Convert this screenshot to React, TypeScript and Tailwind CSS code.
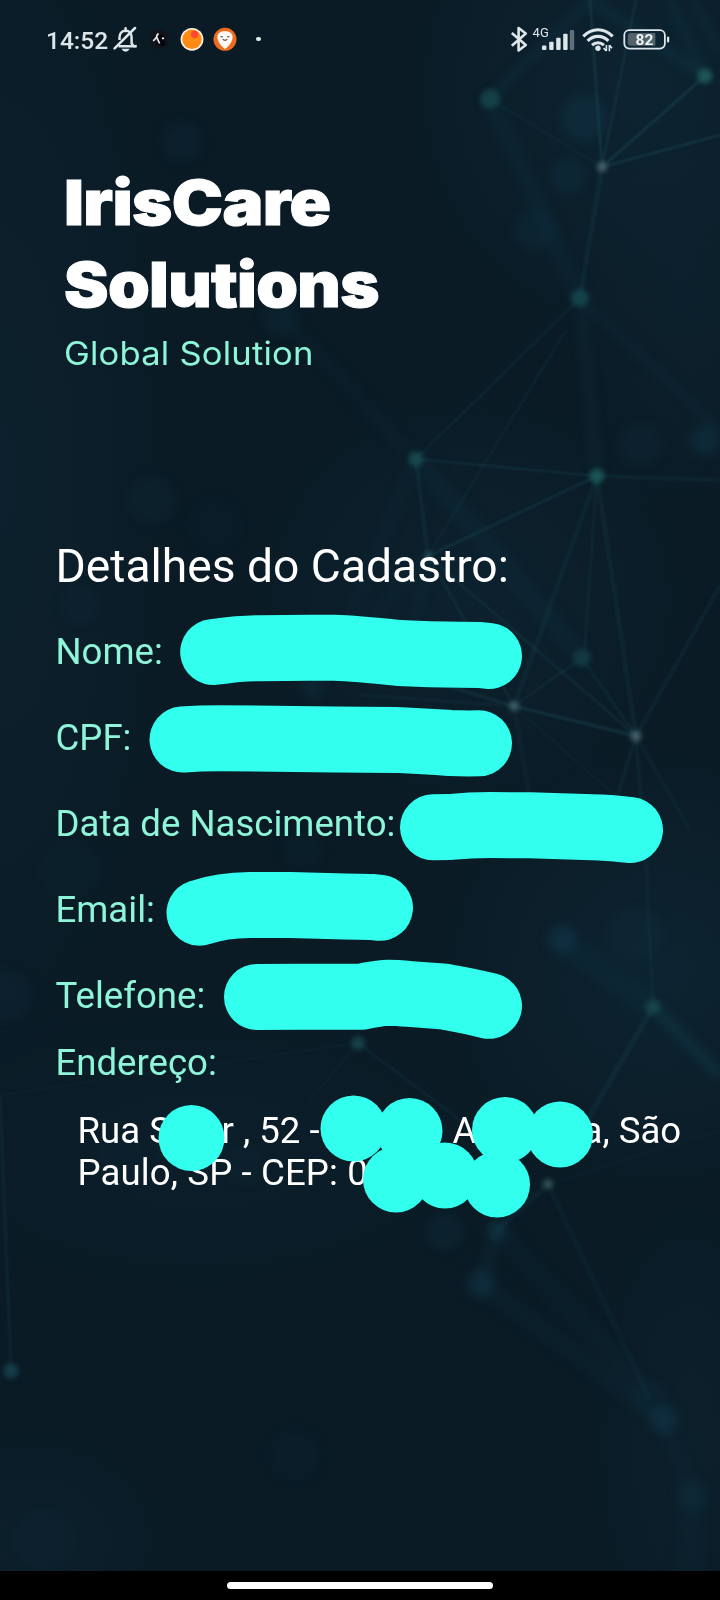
const sharpLines: [number, number, number, number, number, number][] = [
  // x1, y1, x2, y2, width, opacity
  [590, 0, 602, 167, 2, 0.6],
  [636, 0, 602, 167, 2, 0.45],
  [705, 76, 602, 167, 2.5, 0.5],
  [720, 135, 602, 167, 2, 0.55],
  [602, 167, 490, 99, 3, 0.16],
  [602, 167, 580, 298, 5, 0.22],
  [580, 298, 416, 459, 2.5, 0.25],
  [566, 330, 428, 556, 2.5, 0.2],
  [416, 459, 597, 476, 2, 0.42],
  [597, 476, 428, 556, 2.5, 0.38],
  [597, 476, 720, 480, 4, 0.22],
  [416, 459, 428, 556, 4, 0.25],
  [428, 556, 514, 706, 2, 0.38],
  [428, 556, 636, 736, 2, 0.38],
  [597, 476, 514, 706, 5, 0.2],
  [597, 476, 584, 658, 2, 0.3],
  [597, 476, 636, 736, 5, 0.2],
  [582, 658, 636, 736, 3, 0.26],
  [582, 658, 514, 706, 2.5, 0.28],
  [514, 706, 636, 736, 3, 0.45],
  [514, 706, 440, 684, 3, 0.35],
  [514, 706, 360, 695, 4, 0.15],
  [720, 586, 636, 736, 4, 0.2],
  [636, 736, 616, 800, 4, 0.2],
  [636, 736, 641, 800, 4, 0.2],
  [636, 736, 690, 830, 4, 0.16],
  [514, 706, 530, 800, 5, 0.15],
  [514, 706, 620, 800, 3, 0.14],
  [653, 1007, 570, 1150, 6, 0.24],
  [653, 1007, 646, 860, 4, 0.16],
  [358, 1043, 460, 1120, 3, 0.2],
  [358, 1043, 310, 1100, 2, 0.15],
  [358, 1043, 0, 1095, 2, 0.12],
  [0, 1095, 11, 1371, 3, 0.24],
  [548, 1184, 497, 1230, 6, 0.18],
  [548, 1184, 650, 1400, 6, 0.12],
  [548, 1184, 720, 1130, 3, 0.1],
];

const softLines: [number, number, number, number, number, number][] = [
  [590, 0, 490, 99, 6, 0.45],
  [590, 0, 705, 76, 6, 0.6],
  [692, 0, 720, 50, 5, 0.45],
  [670, 0, 705, 76, 8, 0.35],
  [490, 99, 580, 298, 18, 0.2],
  [580, 298, 597, 476, 10, 0.22],
  [580, 298, 720, 430, 9, 0.22],
  [280, 315, 416, 459, 12, 0.13],
  [416, 459, 582, 658, 20, 0.2],
  [416, 459, 340, 640, 14, 0.12],
  [428, 556, 415, 620, 10, 0.2],
  [428, 556, 370, 620, 8, 0.2],
  [562, 941, 653, 1007, 24, 0.2],
  [653, 1007, 720, 1075, 12, 0.5],
  [497, 1230, 481, 1284, 12, 0.25],
  [481, 1284, 664, 1420, 18, 0.15],
  [497, 1230, 650, 1395, 20, 0.13],
  [664, 1420, 692, 1495, 14, 0.13],
  [692, 1495, 690, 1590, 26, 0.12],
];

const nodes: [number, number, number, string, number][] = [
  [490, 99, 10, "#17494f", 0.75],
  [705, 76, 7.5, "#205c5a", 0.85],
  [602, 167, 5, "#4d666c", 0.9],
  [580, 298, 9, "#15454d", 0.9],
  [416, 459, 7.5, "#1a5052", 0.8],
  [597, 476, 7.5, "#1d5b59", 0.85],
  [428, 556, 4, "#345b62", 0.6],
  [582, 658, 9, "#133c45", 0.9],
  [514, 706, 5, "#425f66", 0.9],
  [636, 736, 5.5, "#4b656c", 0.85],
  [653, 1007, 7.5, "#18464e", 0.9],
  [358, 1043, 7, "#18464e", 0.85],
  [548, 1184, 5, "#375a5c", 0.85],
  [11, 1371, 7.5, "#16404e", 0.9],
];

const glows: [number, number, number, number][] = [
  [584, 118, 24, 0.32],
  [568, 176, 17, 0.28],
  [535, 230, 22, 0.2],
  [705, 440, 16, 0.4],
  [640, 445, 22, 0.17],
  [182, 142, 20, 0.18],
  [280, 318, 17, 0.2],
  [152, 500, 24, 0.14],
  [215, 525, 26, 0.06],
  [80, 605, 20, 0.14],
  [313, 688, 12, 0.28],
  [562, 939, 14, 0.5],
  [635, 935, 28, 0.14],
  [303, 850, 18, 0.12],
  [5, 995, 26, 0.16],
  [70, 870, 30, 0.08],
  [445, 1232, 18, 0.22],
  [497, 1230, 10, 0.6],
  [481, 1284, 14, 0.45],
  [664, 1420, 14, 0.5],
  [650, 1398, 18, 0.15],
  [692, 1495, 16, 0.25],
  [295, 1455, 26, 0.08],
  [45, 1540, 32, 0.08],
  [120, 1160, 26, 0.1],
  [245, 1165, 20, 0.1],
];

const hazes: [number, number, number, number, number][] = [
  [640, 90, 240, 260, 0.8],
  [690, 320, 130, 200, 0.4],
  [0, 480, 180, 620, 0.5],
  [470, 600, 230, 220, 0.6],
  [660, 970, 230, 230, 0.8],
  [200, 1150, 330, 160, 0.3],
  [690, 1440, 110, 260, 0.4],
  [30, 1540, 150, 120, 0.4],
];

function NetworkBackdrop() {
  return (
    <svg className="absolute inset-0 h-[1571px] w-[720px]" viewBox="0 0 720 1571" aria-hidden="true">
      <defs>
        <filter id="soft" filterUnits="userSpaceOnUse" x="-40" y="-40" width="800" height="1660" colorInterpolationFilters="sRGB">
          <feGaussianBlur stdDeviation="5" />
        </filter>
        <filter id="dot" filterUnits="userSpaceOnUse" x="-20" y="-20" width="760" height="1620" colorInterpolationFilters="sRGB">
          <feGaussianBlur stdDeviation="2.4" />
        </filter>
        <filter id="line" filterUnits="userSpaceOnUse" x="-20" y="-20" width="760" height="1620" colorInterpolationFilters="sRGB">
          <feGaussianBlur stdDeviation="1" />
        </filter>
        <radialGradient id="haze">
          <stop offset="0" stopColor="#0e2635" />
          <stop offset="0.5" stopColor="#0e2635" stopOpacity="0.5" />
          <stop offset="1" stopColor="#0e2635" stopOpacity="0" />
        </radialGradient>
      </defs>
      {hazes.map(([x, y, rx, ry, o], i) => (
        <ellipse key={i} cx={x} cy={y} rx={rx} ry={ry} opacity={o} fill="url(#haze)" />
      ))}
      <g filter="url(#soft)" stroke="#133a4a">
        {softLines.map(([x1, y1, x2, y2, w, o], i) => (
          <line key={i} x1={x1} y1={y1} x2={x2} y2={y2} strokeWidth={w} opacity={o} />
        ))}
        {glows.map(([x, y, r, o], i) => (
          <circle key={i} cx={x} cy={y} r={r} fill="#123a4e" stroke="none" opacity={o} />
        ))}
      </g>
      <g filter="url(#line)" stroke="#1b4a58">
        {sharpLines.map(([x1, y1, x2, y2, w, o], i) => (
          <line key={i} x1={x1} y1={y1} x2={x2} y2={y2} strokeWidth={w} opacity={o} />
        ))}
      </g>
      <g filter="url(#dot)">
        {nodes.map(([x, y, r, c, o], i) => (
          <circle key={i} cx={x} cy={y} r={r} fill={c} opacity={o} />
        ))}
      </g>
    </svg>
  );
}

function Redactions() {
  return (
    <svg
      className="pointer-events-none absolute inset-0 h-[1600px] w-[720px]"
      viewBox="0 0 720 1600"
      fill="none"
      stroke="#33ffee"
      strokeWidth="66"
      strokeLinecap="round"
      strokeLinejoin="round"
      aria-hidden="true"
    >
      <path d="M213.2 652L222 651Q238 648.6 260 648.2Q297 647.4 334 647.8Q355 648.4 399 653Q430 654.4 460 654.8L480 655L489 656" />
      <path d="M182.5 739.5Q200 738.2 220 738.2L335 739.4L395 739.9Q425 741.2 450 743Q465 743.7 479 743.3" />
      <path d="M433 827.3L450 827Q470 825 490 825L530 825.3L600 827.5Q618 828.6 630 830" />
      <path d="M199.5 912.7Q222 905.2 250 905L290 905L345 906.5L371 906.9L380 907.8" />
      <path d="M257 997L300 996.7L362 996.7Q378 993 388 992.7Q396 992.7 410 994L445 996.7Q465 1000 489 1005.8" />
      <g fill="#33ffee" stroke="none">
        <circle cx="191.5" cy="1138" r="33" />
        <circle cx="353.5" cy="1128.5" r="33" />
        <circle cx="409.5" cy="1131" r="33" />
        <circle cx="505" cy="1130" r="33" />
        <circle cx="560" cy="1134.5" r="33" />
        <circle cx="396" cy="1179.5" r="33" />
        <circle cx="445" cy="1175.5" r="33" />
        <circle cx="497" cy="1184.5" r="33" />
      </g>
    </svg>
  );
}

function StatusBar() {
  return (
    <header className="flex h-[78px] items-center justify-between pl-[46px] pr-[50px] text-[#dde6ea]">
      <div className="flex items-center">
        <span className="w-[67px] whitespace-nowrap pt-[3px] text-[24.5px] leading-[28px] font-medium">14:52</span>
        <svg className="h-[28px] w-[26px]" viewBox="113 25 26 28" fill="none" stroke="currentColor" strokeWidth="2.5">
          <path d="M118.5 46.2H133.6L131.6 43.3V37.5C131.6 33.5 129.4 30.7 125.7 30.7C121.9 30.7 119.5 33.4 119.5 37.5V40" />
          <path d="M125.6 31V28.2M114.6 48.4L135 28" strokeLinecap="round" />
          <path d="M133 46.2H136.8" />
          <path d="M121.4 48.8H129.8Q128.2 51.8 125.6 51.8Q123 51.8 121.4 48.8Z" fill="currentColor" stroke="none" />
        </svg>
        <svg className="ml-[8px] h-[26px] w-[24px]" viewBox="147 26 24 26">
          <circle cx="159" cy="39.3" r="10" fill="#11151a" />
          <path d="M156 44Q158 37 162 33.5Q165.5 36 164.5 46Q160 46.5 156 44Z" fill="#04050f" />
          <path d="M158.5 33.5Q156.5 35 156.7 37.2L159.6 43.5M156.7 37.2L153.2 41" fill="none" stroke="#e8e8ee" strokeWidth="1.7" />
          <circle cx="163" cy="38.3" r="1.1" fill="#ffffff" />
        </svg>
        <svg className="ml-[9px] h-[26px] w-[24px]" viewBox="180 26 24 26">
          <circle cx="192" cy="39.3" r="11.4" fill="#fff3e6" />
          <circle cx="192" cy="39.3" r="9.7" fill="#ff8a14" />
          <circle cx="194.6" cy="34.5" r="3.7" fill="#ff4a33" />
        </svg>
        <svg className="ml-[9px] h-[26px] w-[24px]" viewBox="213.5 26 24 26">
          <circle cx="225.5" cy="39.3" r="11.5" fill="#ee6c1d" />
          <path d="M225.5 49C222 46.5 217.9 41.5 217.9 36.9C217.9 33.3 221 31.3 225.5 31.3C230 31.3 233.1 33.3 233.1 36.9C233.1 41.5 229 46.5 225.5 49Z" fill="#fffaf5" />
          <path d="M221 36.8H223.3M227.7 36.8H230M223.2 39.4Q225.5 41.2 227.8 39.4" fill="none" stroke="#46322c" strokeWidth="1.1" />
        </svg>
        <span className="ml-[19px] size-[4.5px] rounded-full bg-[#e2eaed]" />
      </div>
      <div className="flex items-center">
        <svg className="h-[28px] w-[18px]" viewBox="510 25 18 28" fill="none" stroke="currentColor" strokeWidth="2.6" strokeLinejoin="round">
          <path d="M511.8 33L525.8 45L518.6 50.5V28L525.8 33.5L511.8 45.8" />
        </svg>
        <svg className="ml-[4px] h-[28px] w-[43px]" viewBox="532 25 43 28" fill="currentColor">
          <text x="532.6" y="37.4" className="font-['Roboto'] text-[13px]">4G</text>
          <rect x="542" y="45.5" width="4.4" height="4.5" rx="1" />
          <rect x="549.2" y="41.7" width="4.4" height="8.3" rx="1" />
          <rect x="556.2" y="37.7" width="4.4" height="12.3" rx="1" />
          <rect x="563.2" y="33.7" width="4.4" height="16.3" rx="1" />
          <rect x="569.8" y="30" width="4.4" height="20" rx="1" opacity="0.4" />
        </svg>
        <svg className="ml-[7px] h-[28px] w-[33px]" viewBox="582 25 33 28" fill="none" stroke="currentColor" strokeWidth="3.1">
          <path d="M583.3 36.3Q590 29.8 598 29.8Q606 29.8 612.7 36.3" />
          <path d="M587.6 40.9Q592.2 36.4 598 36.4Q603.8 36.4 608.4 40.9" />
          <path d="M592 45.2Q594.8 42.7 598 42.7Q601.2 42.7 604 45.2" />
          <circle cx="598" cy="48.3" r="2.7" fill="currentColor" stroke="none" />
          <path d="M606.4 45V51M603.6 48L606.2 51M609.4 51.2V45M609.6 45.2L612 48.2" strokeWidth="1.6" />
        </svg>
        <svg className="ml-[8px] h-[28px] w-[47px]" viewBox="623 25 47 28">
          <rect x="624.3" y="30.2" width="40.6" height="18.4" rx="5" fill="none" stroke="#dde6ea" strokeWidth="1.8" />
          <path d="M631 33H655.3V45.7H631Q627.8 45.7 627.8 42.5V36.2Q627.8 33 631 33Z" fill="#53636c" />
          <rect x="667" y="36.5" width="2.2" height="6" rx="1" fill="#dde6ea" />
          <text x="644.5" y="45" textAnchor="middle" fill="#eef3f5" className="font-['Roboto'] text-[15.5px] font-bold">82</text>
        </svg>
      </div>
    </header>
  );
}

const fields = ["Nome:", "CPF:", "Data de Nascimento:", "Email:", "Telefone:"];

export default function App() {
  return (
    <div className="relative flex h-[1600px] w-[720px] flex-col overflow-hidden bg-[#0a1b25] font-['Roboto',sans-serif]">
      <NetworkBackdrop />
      <div className="relative flex h-[1571px] flex-col">
        <StatusBar />
        <div className="flex h-[303px] flex-col pl-[64px] pt-[83px] font-['Inter',sans-serif]">
          <h1 className="flex flex-col text-[62.5px] font-black leading-[82px] text-white [-webkit-text-stroke:1px_#fff]">
            <span className="origin-left scale-x-[1.098] tracking-[-0.6px]">IrisCare</span>
            <span className="origin-left scale-x-[1.07] tracking-[-0.6px]">Solutions</span>
          </h1>
          <p className="mt-[9px] origin-left scale-x-[1.08] text-[32px] leading-[40px] tracking-[0.2px] text-[#8ef5d8]">Global Solution</p>
        </div>
        <main className="flex flex-col pl-[55.5px] pt-[157px]">
          <h2 className="text-[46.2px] leading-[56px] text-white">Detalhes do Cadastro:</h2>
          <div className="mt-[15px] flex flex-col text-[36.6px] leading-[86px] text-[#8ef5d8]">
            {fields.map((label) => (
              <span key={label}>{label}</span>
            ))}
          </div>
          <div className="mt-[3px] text-[36.6px] leading-[42px] text-[#8ef5d8]">Endereço:</div>
          <address className="mt-[26px] flex flex-col pl-[22px] text-[36.6px] not-italic leading-[42px] text-white">
            <div className="flex whitespace-pre">
              <span className="w-[144px]">Rua S</span>
              <span className="w-[231px]">r , 52 -</span>
              <span className="w-[130px]">A</span>
              <span>a, São</span>
            </div>
            <div className="tracking-[0.12px]">Paulo, SP - CEP: 0</div>
          </address>
        </main>
      </div>
      <Redactions />
      <footer className="relative flex h-[29px] justify-center bg-black pt-[11px]">
        <div className="h-[7px] w-[266px] rounded-full bg-white" />
      </footer>
    </div>
  );
}
